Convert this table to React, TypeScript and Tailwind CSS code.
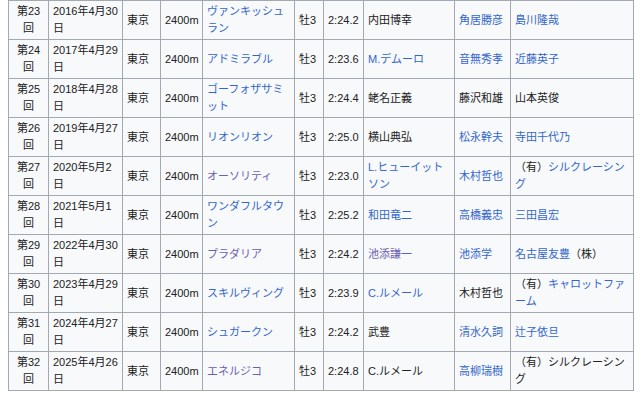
type Seg = { t: string; c?: "b" | "v" };
type Row = {
  no: string;
  date: string;
  horse: Seg;
  time: string;
  jockey: Seg;
  trainer: Seg;
  owner: Seg[];
};

const rows: Row[] = [
  { no: "23", date: "2016年4月30日", horse: { t: "ヴァンキッシュラン", c: "b" }, time: "2:24.2", jockey: { t: "内田博幸" }, trainer: { t: "角居勝彦", c: "b" }, owner: [{ t: "島川隆哉", c: "b" }] },
  { no: "24", date: "2017年4月29日", horse: { t: "アドミラブル", c: "b" }, time: "2:23.6", jockey: { t: "M.デムーロ", c: "b" }, trainer: { t: "音無秀孝", c: "b" }, owner: [{ t: "近藤英子", c: "b" }] },
  { no: "25", date: "2018年4月28日", horse: { t: "ゴーフォザサミット", c: "b" }, time: "2:24.4", jockey: { t: "蛯名正義" }, trainer: { t: "藤沢和雄" }, owner: [{ t: "山本英俊" }] },
  { no: "26", date: "2019年4月27日", horse: { t: "リオンリオン", c: "b" }, time: "2:25.0", jockey: { t: "横山典弘" }, trainer: { t: "松永幹夫", c: "b" }, owner: [{ t: "寺田千代乃", c: "b" }] },
  { no: "27", date: "2020年5月2日", horse: { t: "オーソリティ", c: "v" }, time: "2:23.0", jockey: { t: "L.ヒューイットソン", c: "b" }, trainer: { t: "木村哲也", c: "b" }, owner: [{ t: "（有）" }, { t: "シルクレーシング", c: "b" }] },
  { no: "28", date: "2021年5月1日", horse: { t: "ワンダフルタウン", c: "b" }, time: "2:25.2", jockey: { t: "和田竜二", c: "b" }, trainer: { t: "高橋義忠", c: "b" }, owner: [{ t: "三田昌宏", c: "b" }] },
  { no: "29", date: "2022年4月30日", horse: { t: "プラダリア", c: "v" }, time: "2:24.2", jockey: { t: "池添謙一", c: "v" }, trainer: { t: "池添学", c: "b" }, owner: [{ t: "名古屋友豊", c: "b" }, { t: "（株）" }] },
  { no: "30", date: "2023年4月29日", horse: { t: "スキルヴィング", c: "b" }, time: "2:23.9", jockey: { t: "C.ルメール", c: "b" }, trainer: { t: "木村哲也" }, owner: [{ t: "（有）" }, { t: "キャロットファーム", c: "b" }] },
  { no: "31", date: "2024年4月27日", horse: { t: "シュガークン", c: "b" }, time: "2:24.2", jockey: { t: "武豊" }, trainer: { t: "清水久詞", c: "b" }, owner: [{ t: "辻子依旦", c: "b" }] },
  { no: "32", date: "2025年4月26日", horse: { t: "エネルジコ", c: "v" }, time: "2:24.8", jockey: { t: "C.ルメール" }, trainer: { t: "高柳瑞樹", c: "b" }, owner: [{ t: "（有）シルクレーシング" }] },
];

const Text = ({ s }: { s: Seg }) => {
  if (s.c === "b") return <a className="text-[#3366cc]">{s.t}</a>;
  if (s.c === "v") return <a className="text-[#6a60b0]">{s.t}</a>;
  return <>{s.t}</>;
};

const td = "border border-[#a2a9b1] px-[4px] py-[2px] align-middle";

export default function App() {
  return (
    <div
      className="bg-white w-[640px] h-[398px] overflow-hidden pl-2 text-[11px] leading-[17px] text-[#202122]"
      style={{ fontFamily: '"Liberation Sans", "Noto Sans CJK JP", sans-serif' }}
    >
      <table className="table-fixed border-collapse bg-[#f8f9fa] w-[625px]">
        <colgroup>
          <col className="w-[40px]" />
          <col className="w-[74px]" />
          <col className="w-[38px]" />
          <col className="w-[42px]" />
          <col className="w-[92px]" />
          <col className="w-[29px]" />
          <col className="w-[40px]" />
          <col className="w-[91px]" />
          <col className="w-[56px]" />
          <col className="w-[123px]" />
        </colgroup>
        <tbody>
          {rows.map((r) => (
            <tr key={r.no} className="h-[39px]">
              <td className={`${td} text-center`}>第{r.no}回</td>
              <td className={`${td} pr-[2px]`}>{r.date}</td>
              <td className={td}>東京</td>
              <td className={td}>2400m</td>
              <td className={td}>
                <Text s={r.horse} />
              </td>
              <td className={td}>牡3</td>
              <td className={td}>{r.time}</td>
              <td className={td}>
                <Text s={r.jockey} />
              </td>
              <td className={td}>
                <Text s={r.trainer} />
              </td>
              <td className={td}>
                {r.owner.map((s, i) => (
                  <Text key={i} s={s} />
                ))}
              </td>
            </tr>
          ))}
        </tbody>
      </table>
    </div>
  );
}
